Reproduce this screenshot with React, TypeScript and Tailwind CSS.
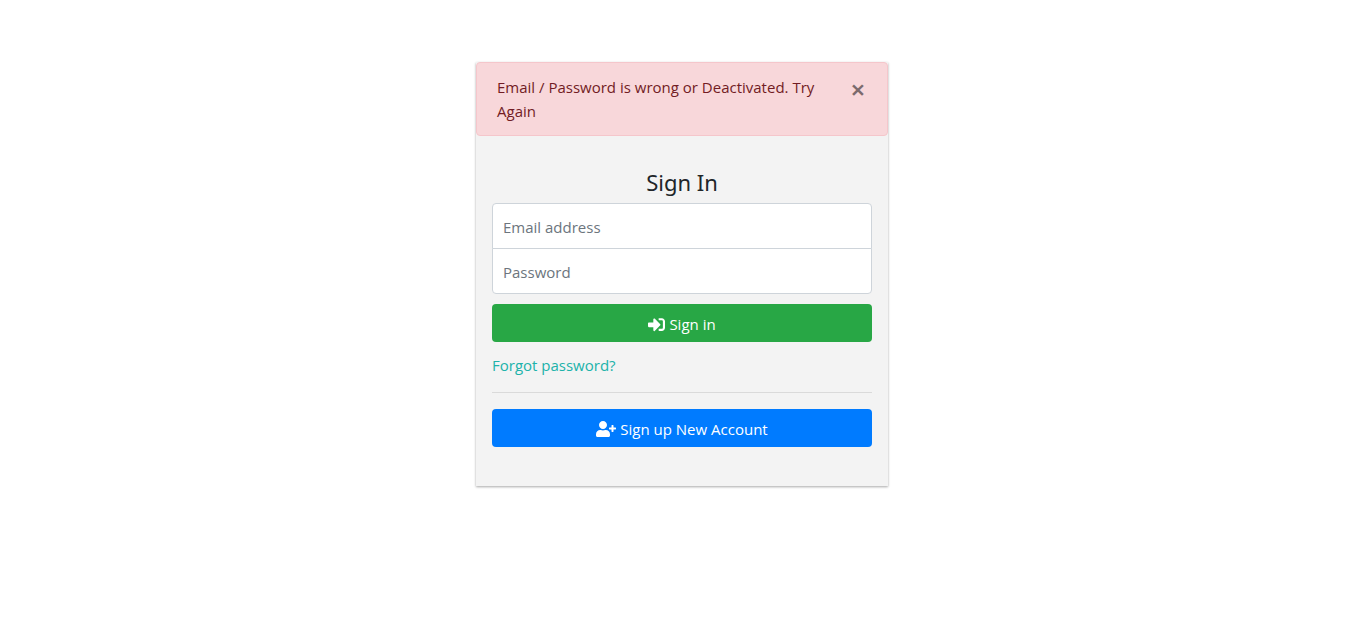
import { FaSignInAlt, FaUserPlus } from "react-icons/fa";
import { useState } from "react";

const fieldClass =
  "relative block h-[46px] w-full border border-[#ced4da] bg-white px-2.5 pt-0.5 text-[15px] text-[#495057] outline-none placeholder:text-[#6c757d] placeholder:opacity-100 focus:z-10";

const buttonClass =
  "flex h-[38px] w-full items-center justify-center gap-1 rounded pt-0.5 text-[15px] text-white";

function Alert({ onClose }: { onClose: () => void }) {
  return (
    <div
      role="alert"
      className="flex items-start rounded border border-[#f5c6cb] bg-[#f8d7da] py-3 pl-5 text-[#721c24]"
    >
      <p className="flex-1">Email / Password is wrong or Deactivated. Try Again</p>
      <button
        type="button"
        aria-label="Close"
        onClick={onClose}
        className="w-[58px] shrink-0 font-['Noto_Sans',sans-serif] text-[26px] leading-7 font-semibold text-black opacity-50"
      >
        ×
      </button>
    </div>
  );
}

export default function App() {
  const [showAlert, setShowAlert] = useState(true);
  return (
    <main className="flex min-h-screen items-start justify-center bg-white pt-[62px] pl-[5px] font-['Open_Sans','Noto_Sans',sans-serif] text-[15px] leading-6 text-[#212529]">
      <section className="w-full max-w-[412px] bg-[#f3f3f3] shadow-[0_1px_3px_rgba(0,0,0,0.12),0_1px_2px_rgba(0,0,0,0.24)]">
        {showAlert && <Alert onClose={() => setShowAlert(false)} />}
        <form className="px-4 pt-8 pb-[39px]" onSubmit={(event) => event.preventDefault()}>
          <h1 className="mb-[7px] text-center font-['Noto_Sans',sans-serif] text-[22px] leading-7">
            Sign In
          </h1>
          <input
            type="email"
            aria-label="Email address"
            placeholder="Email address"
            className={`${fieldClass} rounded-t`}
          />
          <input
            type="password"
            aria-label="Password"
            placeholder="Password"
            className={`${fieldClass} -mt-px mb-2.5 rounded-b`}
          />
          <button type="submit" className={`${buttonClass} bg-[#28a745]`}>
            <FaSignInAlt aria-hidden="true" className="size-[17px]" />
            Sign in
          </button>
          <a href="#forgot" className="mt-[11px] block w-fit text-[#20b2aa]">
            Forgot password?
          </a>
          <hr className="mt-[15px] mb-4 border-t border-black/10" />
          <button type="button" className={`${buttonClass} bg-[#007bff]`}>
            <FaUserPlus aria-hidden="true" className="h-4 w-5" />
            Sign up New Account
          </button>
        </form>
      </section>
    </main>
  );
}
